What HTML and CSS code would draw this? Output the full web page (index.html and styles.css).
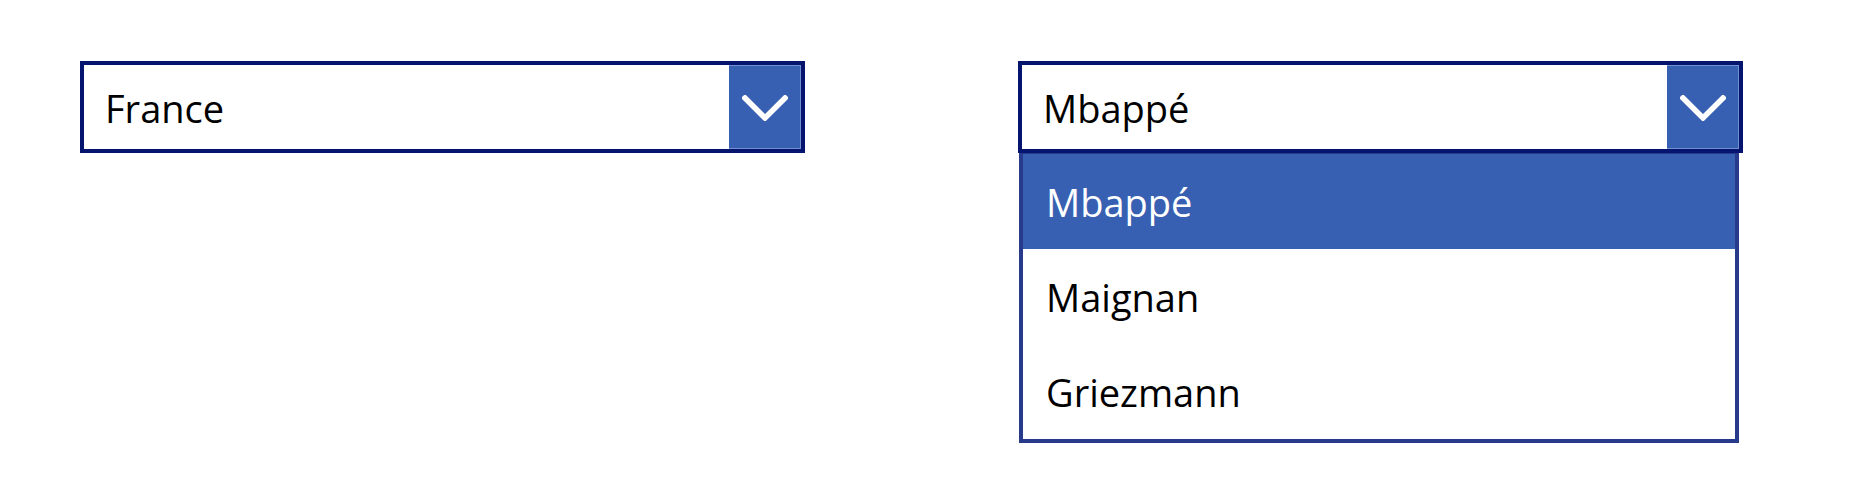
FILE: index.html
```html
<!DOCTYPE html>
<html lang="fr">
<head>
<meta charset="utf-8">
<title>Dropdowns</title>
<link rel="stylesheet" href="styles.css">
</head>
<body>
<div class="page">
  <div class="dropdown">
    <div class="field">
      <span class="value">France</span>
      <span class="btn">
        <svg class="chevron" viewBox="0 0 46 26" width="46" height="26"><polyline points="3,3 23,23 43,3" fill="none" stroke="#fff" stroke-width="5.5" stroke-linecap="square" stroke-linejoin="miter"/></svg>
      </span>
    </div>
  </div>
  <div class="dropdown">
    <div class="field">
      <span class="value">Mbappé</span>
      <span class="btn">
        <svg class="chevron" viewBox="0 0 46 26" width="46" height="26"><polyline points="3,3 23,23 43,3" fill="none" stroke="#fff" stroke-width="5.5" stroke-linecap="square" stroke-linejoin="miter"/></svg>
      </span>
    </div>
    <ul class="list">
      <li class="item selected">Mbappé</li>
      <li class="item">Maignan</li>
      <li class="item">Griezmann</li>
    </ul>
  </div>
</div>
</body>
</html>
```
FILE: styles.css
```css
html, body {
  margin: 0;
  padding: 0;
  background: #ffffff;
}
body {
  font-family: "Open Sans", "Liberation Sans", sans-serif;
  color: #000000;
}
.page {
  display: flex;
  align-items: flex-start;
  gap: 213px;
  padding: 61px 0 0 80px;
}
.dropdown {
  width: 725px;
  display: flex;
  flex-direction: column;
}
.field {
  box-sizing: border-box;
  height: 92px;
  border: 4px solid #04146f;
  display: flex;
  align-items: stretch;
  background: #ffffff;
}
.value {
  flex: 1;
  display: flex;
  align-items: center;
  padding-left: 21px;
  padding-top: 2px;
  font-size: 38px;
}
.btn {
  box-sizing: border-box;
  width: 72px;
  background: #3860b2;
  border: 1px solid #7190cf;
  border-left: none;
  display: flex;
  align-items: center;
  justify-content: center;
}
.chevron {
  display: block;
  margin-top: 2px;
}
.list {
  list-style: none;
  margin: 0 0 0 1px;
  padding: 0;
  width: 720px;
  box-sizing: border-box;
  border: 4px solid #273a8c;
  border-top: 1px solid #273a8c;
  background: #ffffff;
}
.item {
  height: 95px;
  display: flex;
  align-items: center;
  padding-left: 23px;
  box-sizing: border-box;
  font-size: 38px;
  color: #000000;
}
.item.selected {
  background: #3860b2;
  color: #ffffff;
}
```
